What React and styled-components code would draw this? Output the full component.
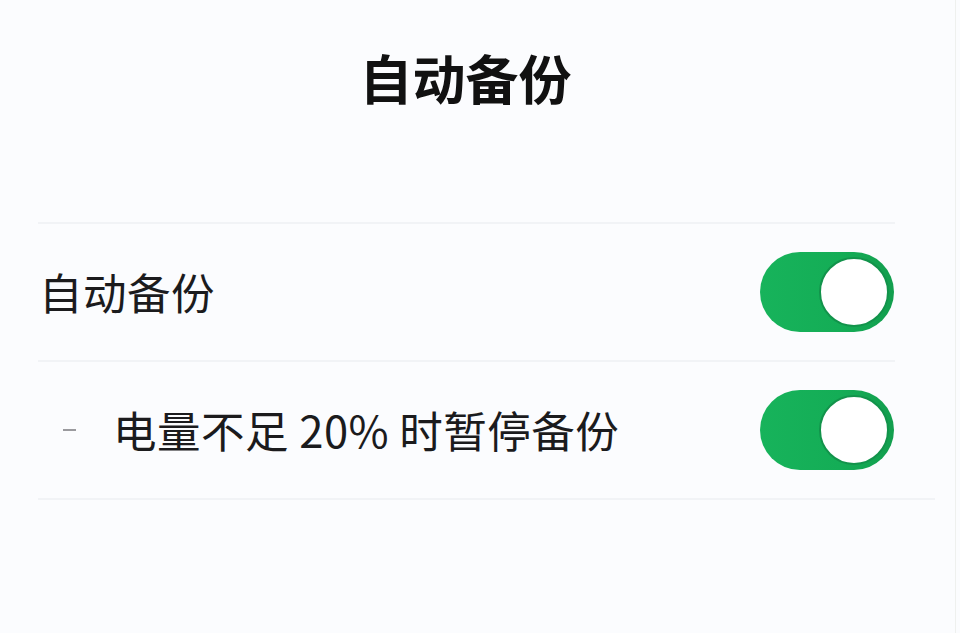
import React from 'react';
import styled, { createGlobalStyle } from 'styled-components';

const GlobalStyle = createGlobalStyle`
  html, body {
    margin: 0;
    padding: 0;
    background: #fbfcfe;
  }
  body {
    font-family: "Noto Sans CJK SC", "Noto Sans", sans-serif;
  }
`;

const Page = styled.div`
  width: 955px;
  height: 633px;
  background: #fbfcfe;
  border-right: 1px solid #eef0ee;
  overflow: hidden;
`;

const Header = styled.header`
  height: 222px;
  display: flex;
  justify-content: center;
  padding-right: 24px;
  box-sizing: border-box;
`;

const Title = styled.h1`
  margin: 0;
  padding-top: 46px;
  font-size: 53px;
  line-height: 1.2;
  font-weight: 700;
  color: #111;
`;

const List = styled.section`
  margin-left: 38px;
  display: flex;
  flex-direction: column;
`;

const Divider = styled.div`
  height: 2px;
  width: ${(p) => (p.$wide ? '897px' : '857px')};
  background: #f1f3f6;
`;

const Row = styled.div`
  width: 857px;
  height: 136px;
  display: flex;
  align-items: center;
  justify-content: space-between;
`;

const Label = styled.div`
  display: flex;
  align-items: center;
  padding-left: ${(p) => (p.$indent ? '25px' : '1px')};
  font-size: 43.5px;
  letter-spacing: 0.5px;
  line-height: 1;
  color: #1b1b1d;
`;

const Dash = styled.span`
  width: 13px;
  height: 2px;
  background: #9a9a9e;
  margin-right: 37px;
`;

const Toggle = styled.div`
  width: 134px;
  height: 80px;
  border-radius: 40px;
  background: linear-gradient(90deg, #17b35b 0%, #14ad56 60%, #129e4e 100%);
  display: flex;
  align-items: center;
  justify-content: ${(p) => (p.$on ? 'flex-end' : 'flex-start')};
  padding: 0 5px;
  box-sizing: border-box;
  margin-right: 1px;
`;

const Knob = styled.div`
  width: 70px;
  height: 70px;
  border-radius: 50%;
  background: #ffffff;
  border: 2px solid #12934b;
  box-sizing: border-box;
`;

const Switch = ({ on }) => (
  <Toggle $on={on}>
    <Knob />
  </Toggle>
);

export default function App() {
  return (
    <>
      <GlobalStyle />
      <Page>
        <Header>
          <Title>自动备份</Title>
        </Header>
        <List>
          <Divider />
          <Row>
            <Label>自动备份</Label>
            <Switch on />
          </Row>
          <Divider />
          <Row>
            <Label $indent>
              <Dash />
              电量不足 20% 时暂停备份
            </Label>
            <Switch on />
          </Row>
          <Divider $wide />
        </List>
      </Page>
    </>
  );
}
